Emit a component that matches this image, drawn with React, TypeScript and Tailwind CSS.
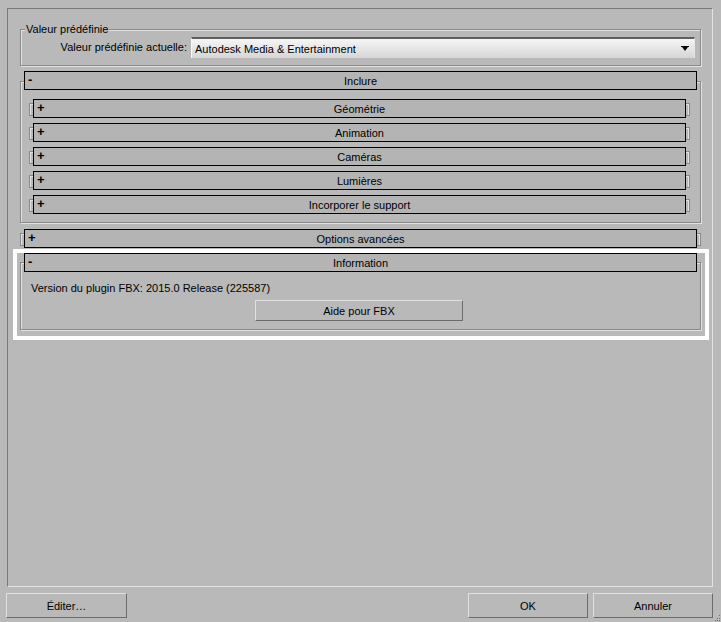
import React from "react";

// Boîte de dialogue d'export FBX (style 3ds Max, thème gris clair)

const FONT = { fontFamily: '"Liberation Sans", Arial, sans-serif' };

// cadre "gravé" façon Windows : trait sombre + trait clair décalé d'un pixel
const ETCHED =
  "border border-[#8a8a8a] shadow-[inset_1px_1px_0_#e2e2e2,1px_1px_0_#e2e2e2]";

function Bracket({ side }: { side: "left" | "right" }) {
  return (
    <div
      className={`w-[4px] h-[13px] mt-[4px] shrink-0 border-y border-[#8a8a8a] ${
        side === "left"
          ? "border-l shadow-[inset_1px_1px_0_#e2e2e2]"
          : "border-r shadow-[inset_-1px_1px_0_#e2e2e2]"
      }`}
    />
  );
}

function RolloutHeader({
  title,
  open,
  className = "",
}: {
  title: string;
  open: boolean;
  className?: string;
}) {
  return (
    <div
      className={`relative h-[19px] bg-[#b4b4b4] border border-black flex items-center justify-center text-black ${className}`}
    >
      <span className="absolute left-[3px] top-[1px] leading-[14px] font-bold text-[13px]">
        {open ? "-" : "+"}
      </span>
      <span className="leading-[14px]">{title}</span>
    </div>
  );
}

function CollapsedRollout({ title, sub = false }: { title: string; sub?: boolean }) {
  return (
    <div className="flex">
      <Bracket side="left" />
      <RolloutHeader title={title} open={false} className={sub ? "w-[653px]" : "w-[673px]"} />
      <Bracket side="right" />
    </div>
  );
}

function WinButton({
  children,
  className = "",
}: {
  children: React.ReactNode;
  className?: string;
}) {
  return (
    <button
      className={`flex items-center justify-center bg-[#b9b9b9] border border-t-[#e0e0e0] border-l-[#e0e0e0] border-r-[#6c6c6c] border-b-[#6c6c6c] text-black leading-[14px] ${className}`}
    >
      {children}
    </button>
  );
}

const SUB_ROLLOUTS = ["Géométrie", "Animation", "Caméras", "Lumières", "Incorporer le support"];

export default function App() {
  return (
    <div
      className="relative w-[721px] h-[622px] bg-[#b9b9b9] text-[11px] text-black flex flex-col overflow-hidden"
      style={FONT}
    >
      {/* Panneau principal */}
      <div className="ml-[7px] mt-[8px] w-[706px] h-[579px] border border-t-[#7a7a7a] border-l-[#7a7a7a] border-r-[#e4e4e4] border-b-[#e4e4e4] pl-[12px] pt-[20px]">
        {/* Valeur prédéfinie */}
        <div className={`relative w-[681px] h-[37px] ${ETCHED} pl-[39px] pt-[7px] flex items-start`}>
          <span className="absolute -top-[8px] left-[4px] px-[1px] bg-[#b9b9b9] leading-[14px]">
            Valeur prédéfinie
          </span>
          <span className="w-[127px] text-right leading-[21px]">Valeur prédéfinie actuelle:</span>
          <div className="ml-[4px] w-[504px] h-[21px] border-t-2 border-t-[#5e5e5e] border-l border-l-[#f8f8f8] border-r border-r-[#e6e6e6] bg-gradient-to-b from-[#f6f6f6] to-[#d6d6d6] flex items-center pl-[3px] pr-[5px]">
            <span className="flex-1 leading-[14px]">Autodesk Media &amp; Entertainment</span>
            <svg width="8" height="6" viewBox="0 0 8 6">
              <rect x="0" y="0" width="8" height="1" fill="#000" />
              <polygon points="1,1 7,1 4,5" fill="#000" />
            </svg>
          </div>
        </div>

        {/* Inclure */}
        <div className="w-[681px] mt-[5px]">
          <RolloutHeader title="Inclure" open className="mx-[4px] z-10" />
          <div className={`-mt-[9px] h-[142px] ${ETCHED} pl-[8px] pr-[9px] pt-[17px] flex flex-col gap-[5px]`}>
            {SUB_ROLLOUTS.map((t) => (
              <CollapsedRollout key={t} title={t} sub />
            ))}
          </div>
        </div>

        {/* Options avancées */}
        <div className="w-[681px] mt-[6px]">
          <CollapsedRollout title="Options avancées" />
        </div>

        {/* Information (encadré blanc de mise en évidence) */}
        <div className="relative w-[681px] mt-[5px]">
          <div className="absolute -left-[7px] -right-[8px] -top-[4px] -bottom-[10px] border-4 border-white pointer-events-none" />
          <RolloutHeader title="Information" open className="mx-[4px] z-10" />
          <div className={`-mt-[10px] h-[68px] ${ETCHED} pl-[10px] pt-[18px]`}>
            <div className="leading-[14px]">Version du plugin FBX: 2015.0 Release (225587)</div>
            <WinButton className="mt-[5px] ml-[224px] w-[208px] h-[21px]">Aide pour FBX</WinButton>
          </div>
        </div>
      </div>

      {/* Boutons du bas */}
      <div className="flex mt-[6px] pl-[6px] pr-[8px]">
        <WinButton className="w-[121px] h-[25px]">Éditer…</WinButton>
        <div className="flex-1" />
        <WinButton className="w-[120px] h-[25px]">OK</WinButton>
        <WinButton className="ml-[5px] w-[120px] h-[25px]">Annuler</WinButton>
      </div>

      {/* Poignée de redimensionnement */}
      <svg className="absolute right-0 bottom-0" width="7" height="8" viewBox="0 0 7 8">
        <rect x="5" y="1" width="1" height="1" fill="#6c6c6c" />
        <rect x="3" y="4" width="1" height="1" fill="#6c6c6c" />
        <rect x="5" y="4" width="1" height="1" fill="#6c6c6c" />
        <rect x="1" y="6" width="1" height="1" fill="#6c6c6c" />
        <rect x="3" y="6" width="1" height="1" fill="#6c6c6c" />
        <rect x="5" y="6" width="1" height="1" fill="#6c6c6c" />
      </svg>
    </div>
  );
}
